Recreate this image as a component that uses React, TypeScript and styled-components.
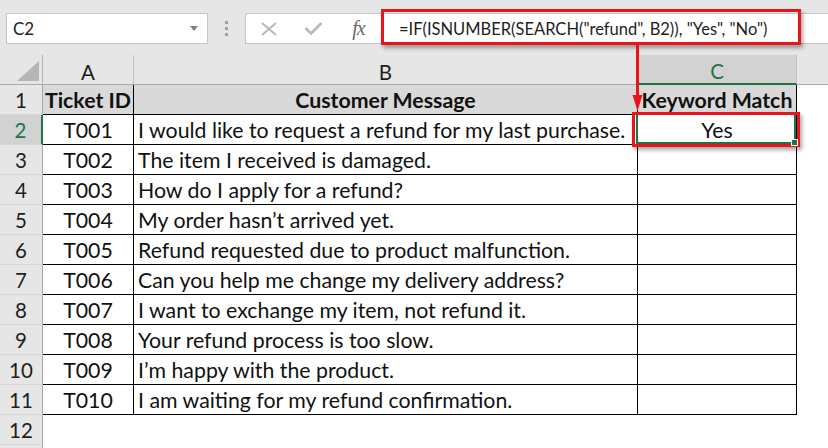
import React from "react";
import styled, { createGlobalStyle } from "styled-components";

const GREEN = "#217346";
const RED = "#e8161c";

const GlobalStyle = createGlobalStyle`
  html, body { margin: 0; padding: 0; background: #fff; }
  body { font-family: Lato, "Liberation Sans", sans-serif; }
`;

const Page = styled.div`
  position: relative;
  width: 828px;
  height: 448px;
  overflow: hidden;
  background: #fff;
`;

const TopBar = styled.div`
  height: 55px;
  box-sizing: border-box;
  background: #e6e6e6;
  padding: 13px 0 0 6px;
  display: flex;
  align-items: flex-start;
`;

const NameBox = styled.div`
  box-sizing: border-box;
  width: 202px;
  height: 31px;
  background: #fff;
  border: 1px solid #c6c6c6;
  display: flex;
  align-items: center;
  justify-content: space-between;
  padding: 0 9px 0 6px;
  font-size: 17px;
  color: #1e1e1e;
`;

const Caret = styled.span`
  width: 0;
  height: 0;
  border-left: 4px solid transparent;
  border-right: 4px solid transparent;
  border-top: 5px solid #7f7f7f;
`;

const Grip = styled.div`
  width: 37px;
  height: 31px;
  display: flex;
  flex-direction: column;
  align-items: center;
  justify-content: center;
  gap: 3px;
`;

const GripDot = styled.span`
  width: 3px;
  height: 3px;
  background: #a3a3a3;
`;

const FormulaBox = styled.div`
  flex: 1;
  height: 31px;
  box-sizing: border-box;
  background: #fff;
  border: 1px solid #c6c6c6;
  border-right: none;
  display: flex;
  align-items: center;
`;

const FxButtons = styled.div`
  width: 135px;
  height: 100%;
  display: flex;
  align-items: center;
`;

const FxButton = styled.div`
  width: 45px;
  height: 100%;
  display: flex;
  align-items: center;
  justify-content: center;
`;

const FxLabel = styled.span`
  font-family: "Liberation Serif", "DejaVu Serif", serif;
  font-style: italic;
  font-size: 20px;
  color: #6a6a6a;
  letter-spacing: -1px;
`;

const FormulaText = styled.div`
  padding-left: 18px;
  font-size: 16.5px;
  color: #1e1e1e;
  white-space: nowrap;
`;

const Sheet = styled.div`
  display: grid;
  grid-template-columns: 43px 91px 504px 159px 1fr;
  grid-auto-rows: 30px;
`;

const Corner = styled.div`
  box-sizing: border-box;
  background: #e6e6e6;
  border-right: 1px solid #b5b5b5;
  border-bottom: 1px solid #ababab;
  display: flex;
  align-items: flex-end;
  justify-content: flex-end;
  padding: 0 3px 3px 0;
`;

const ColHeader = styled.div<{ $selected?: boolean; $last?: boolean }>`
  box-sizing: border-box;
  background: ${(p) => (p.$selected ? "#d2d2d2" : "#e6e6e6")};
  color: ${(p) => (p.$selected ? GREEN : "#1e1e1e")};
  border-right: ${(p) => (p.$last ? "none" : "1px solid #c3c3c3")};
  border-bottom: ${(p) => (p.$selected ? `2px solid ${GREEN}` : "1px solid #ababab")};
  display: flex;
  align-items: center;
  justify-content: center;
  padding-top: 4px;
  font-size: 20.5px;
`;

const RowHeader = styled.div<{ $selected?: boolean }>`
  box-sizing: border-box;
  background: ${(p) => (p.$selected ? "#d2d2d2" : "#e6e6e6")};
  color: ${(p) => (p.$selected ? GREEN : "#1e1e1e")};
  border-right: ${(p) => (p.$selected ? `2px solid ${GREEN}` : "1px solid #a8a8a8")};
  border-bottom: 1px solid #d6d6d6;
  display: flex;
  align-items: center;
  justify-content: center;
  font-size: 20.5px;
`;

const Cell = styled.div<{
  $border?: boolean;
  $head?: boolean;
  $align?: "left" | "center";
  $active?: boolean;
}>`
  position: relative;
  box-sizing: border-box;
  border-right: ${(p) => (p.$border ? "1px solid #000" : "none")};
  border-bottom: ${(p) => (p.$border ? "1px solid #000" : "none")};
  background: ${(p) => (p.$head ? "#d9d9d9" : "#fff")};
  font-weight: ${(p) => (p.$head ? 700 : 400)};
  font-size: 21.3px;
  color: #111;
  display: flex;
  align-items: center;
  justify-content: ${(p) => (p.$align === "left" ? "flex-start" : "center")};
  padding-left: ${(p) => (p.$align === "left" ? "4px" : "0")};
  white-space: nowrap;
  overflow: visible;
  ${(p) =>
    p.$active
      ? `
    &::after {
      content: "";
      position: absolute;
      left: -2px;
      top: -2px;
      right: 0;
      bottom: 0;
      border: 2px solid ${GREEN};
    }
    &::before {
      content: "";
      position: absolute;
      right: -2px;
      bottom: -2px;
      width: 5px;
      height: 5px;
      background: ${GREEN};
      border: 1px solid #fff;
      z-index: 1;
    }
  `
      : ""}
`;

const RedFrame = styled.div<{ $x: number; $y: number; $w: number; $h: number }>`
  position: absolute;
  left: ${(p) => p.$x}px;
  top: ${(p) => p.$y}px;
  width: ${(p) => p.$w}px;
  height: ${(p) => p.$h}px;
  box-sizing: border-box;
  border: 3px solid ${RED};
  box-shadow: 2px 3px 4px rgba(0, 0, 0, 0.35);
  pointer-events: none;
`;

const ArrowSvg = styled.svg`
  position: absolute;
  left: 628px;
  top: 44px;
  overflow: visible;
`;

const rows: [string, string][] = [
  ["T001", "I would like to request a refund for my last purchase."],
  ["T002", "The item I received is damaged."],
  ["T003", "How do I apply for a refund?"],
  ["T004", "My order hasn\u2019t arrived yet."],
  ["T005", "Refund requested due to product malfunction."],
  ["T006", "Can you help me change my delivery address?"],
  ["T007", "I want to exchange my item, not refund it."],
  ["T008", "Your refund process is too slow."],
  ["T009", "I\u2019m happy with the product."],
  ["T010", "I am waiting for my refund confirmation."],
];

export default function App() {
  return (
    <Page>
      <GlobalStyle />
      <TopBar>
        <NameBox>
          <span>C2</span>
          <Caret />
        </NameBox>
        <Grip>
          <GripDot />
          <GripDot />
          <GripDot />
        </Grip>
        <FormulaBox>
          <FxButtons>
            <FxButton>
              <svg width="18" height="14" viewBox="0 0 18 14">
                <path d="M2 1 L16 13 M16 1 L2 13" stroke="#b8b8b8" strokeWidth="2" fill="none" />
              </svg>
            </FxButton>
            <FxButton>
              <svg width="19" height="13" viewBox="0 0 19 13">
                <path d="M1.5 6 L7 11.5 L17.5 1" stroke="#b8b8b8" strokeWidth="2.6" fill="none" />
              </svg>
            </FxButton>
            <FxButton>
              <FxLabel>fx</FxLabel>
            </FxButton>
          </FxButtons>
          <FormulaText>=IF(ISNUMBER(SEARCH("refund", B2)), "Yes", "No")</FormulaText>
        </FormulaBox>
      </TopBar>

      <Sheet>
        <Corner>
          <svg width="22" height="20" viewBox="0 0 22 20">
            <polygon points="0,20 22,20 22,0" fill="#b5b5b5" />
          </svg>
        </Corner>
        <ColHeader>A</ColHeader>
        <ColHeader>B</ColHeader>
        <ColHeader $selected>C</ColHeader>
        <ColHeader $last />

        <RowHeader>1</RowHeader>
        <Cell $border $head>Ticket ID</Cell>
        <Cell $border $head>Customer Message</Cell>
        <Cell $border $head>Keyword Match</Cell>
        <Cell />

        {rows.map(([id, msg], i) => (
          <React.Fragment key={id}>
            <RowHeader $selected={i === 0}>{i + 2}</RowHeader>
            <Cell $border>{id}</Cell>
            <Cell $border $align="left">{msg}</Cell>
            <Cell $border $active={i === 0}>{i === 0 ? "Yes" : ""}</Cell>
            <Cell />
          </React.Fragment>
        ))}

        <RowHeader>12</RowHeader>
        <Cell />
        <Cell />
        <Cell />
        <Cell />

        <RowHeader />
        <Cell />
        <Cell />
        <Cell />
        <Cell />
      </Sheet>

      <RedFrame $x={381} $y={9} $w={420} $h={36} />
      <RedFrame $x={632} $y={112} $w={168} $h={35} />
      <ArrowSvg width="20" height="70" viewBox="0 0 20 70">
        <line x1="9.5" y1="0" x2="9.5" y2="54" stroke={RED} strokeWidth="3" />
        <polygon points="4.5,51 14.5,51 9.5,67" fill={RED} />
      </ArrowSvg>
    </Page>
  );
}
